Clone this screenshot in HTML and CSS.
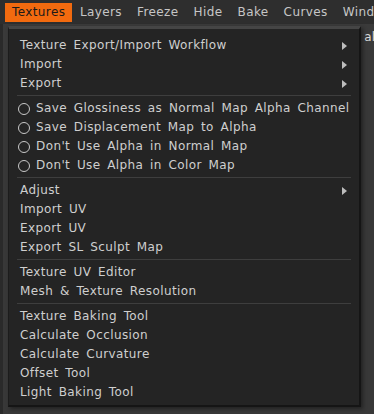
FILE: index.html
```html
<!DOCTYPE html>
<html lang="en">
<head>
  <meta charset="UTF-8" />
  <title>Textures menu</title>
  <link rel="stylesheet" href="styles.css">
</head>
<body>
  <div class="menubar">
    <span class="top active">Textures</span>
    <span class="top">Layers</span>
    <span class="top">Freeze</span>
    <span class="top">Hide</span>
    <span class="top">Bake</span>
    <span class="top">Curves</span>
    <span class="top">Windows</span>
  </div>

  <div class="workspace">
    <div class="toolbar"><span class="ghost">al</span></div>

    <div class="dropdown">
      <div class="item sub">Texture Export/Import Workflow</div>
      <div class="item sub">Import</div>
      <div class="item sub">Export</div>
      <div class="sep"></div>
      <div class="item radio"><i></i>Save Glossiness as Normal Map Alpha Channel</div>
      <div class="item radio"><i></i>Save Displacement Map to Alpha</div>
      <div class="item radio"><i></i>Don't Use Alpha in Normal Map</div>
      <div class="item radio"><i></i>Don't Use Alpha in Color Map</div>
      <div class="sep"></div>
      <div class="item sub">Adjust</div>
      <div class="item">Import UV</div>
      <div class="item">Export UV</div>
      <div class="item">Export SL Sculpt Map</div>
      <div class="sep"></div>
      <div class="item">Texture UV Editor</div>
      <div class="item">Mesh &amp; Texture Resolution</div>
      <div class="sep"></div>
      <div class="item">Texture Baking Tool</div>
      <div class="item">Calculate Occlusion</div>
      <div class="item">Calculate Curvature</div>
      <div class="item">Offset Tool</div>
      <div class="item">Light Baking Tool</div>
    </div>
  </div>
</body>
</html>
```

FILE: styles.css
```css
* {
  margin: 0;
  padding: 0;
  box-sizing: border-box;
}
html, body {
  width: 100%;
  height: 100%;
  overflow: hidden;
}
body {
  font-family: 'DejaVu Sans', sans-serif;
  font-size: 12px;
  background: #3a3a3a;
  color: #cfcfcf;
}
.menubar {
  display: flex;
  height: 24px;
  padding: 3px 0 0 5px;
  background: #2e2e2e;
  white-space: nowrap;
  overflow: hidden;
}
.top {
  height: 19px;
  line-height: 19px;
  padding: 0 7.5px;
  letter-spacing: 0.4px;
  color: #c6c6c6;
}
.top.active {
  padding: 0 7px;
  background: #f26a0f;
  color: #1a1a1a;
}
.workspace {
  position: relative;
  height: 390px;
  background: #383838;
  border-left: 3px solid #2a2a2a;
}
.toolbar {
  height: 26px;
  background: #3a3a3a;
  display: flex;
  justify-content: flex-end;
  align-items: center;
}
.ghost {
  color: #d8d8d8;
  margin-right: -1px;
}
.dropdown {
  position: absolute;
  left: 5px;
  top: 2px;
  width: 353px;
  padding: 7px 8px 3px 8px;
  background: #242424;
  border-top: 3px solid #454545;
  border-right: 2px solid #151515;
  border-bottom: 2px solid #151515;
  border-left: 1px solid #1c1c1c;
  box-shadow: 2px 2px 4px rgba(0,0,0,0.4);
}
.item {
  position: relative;
  height: 19px;
  line-height: 19px;
  padding-left: 3px;
  letter-spacing: 0.4px;
  word-spacing: 2.5px;
  color: #cfcfcf;
  white-space: nowrap;
}
.item.sub::after {
  content: "";
  position: absolute;
  right: 4px;
  top: 6px;
  border-left: 5px solid #bdbdbd;
  border-top: 4px solid transparent;
  border-bottom: 4px solid transparent;
}
.item.radio {
  display: flex;
  align-items: center;
  gap: 6px;
  padding-left: 1px;
}
.item.radio i {
  width: 12px;
  height: 12px;
  border: 1.5px solid #c8c8c8;
  border-radius: 50%;
  flex: none;
}
.sep {
  height: 1px;
  margin: 2px 0 3px 0;
  background: #3e3e3e;
}
```
